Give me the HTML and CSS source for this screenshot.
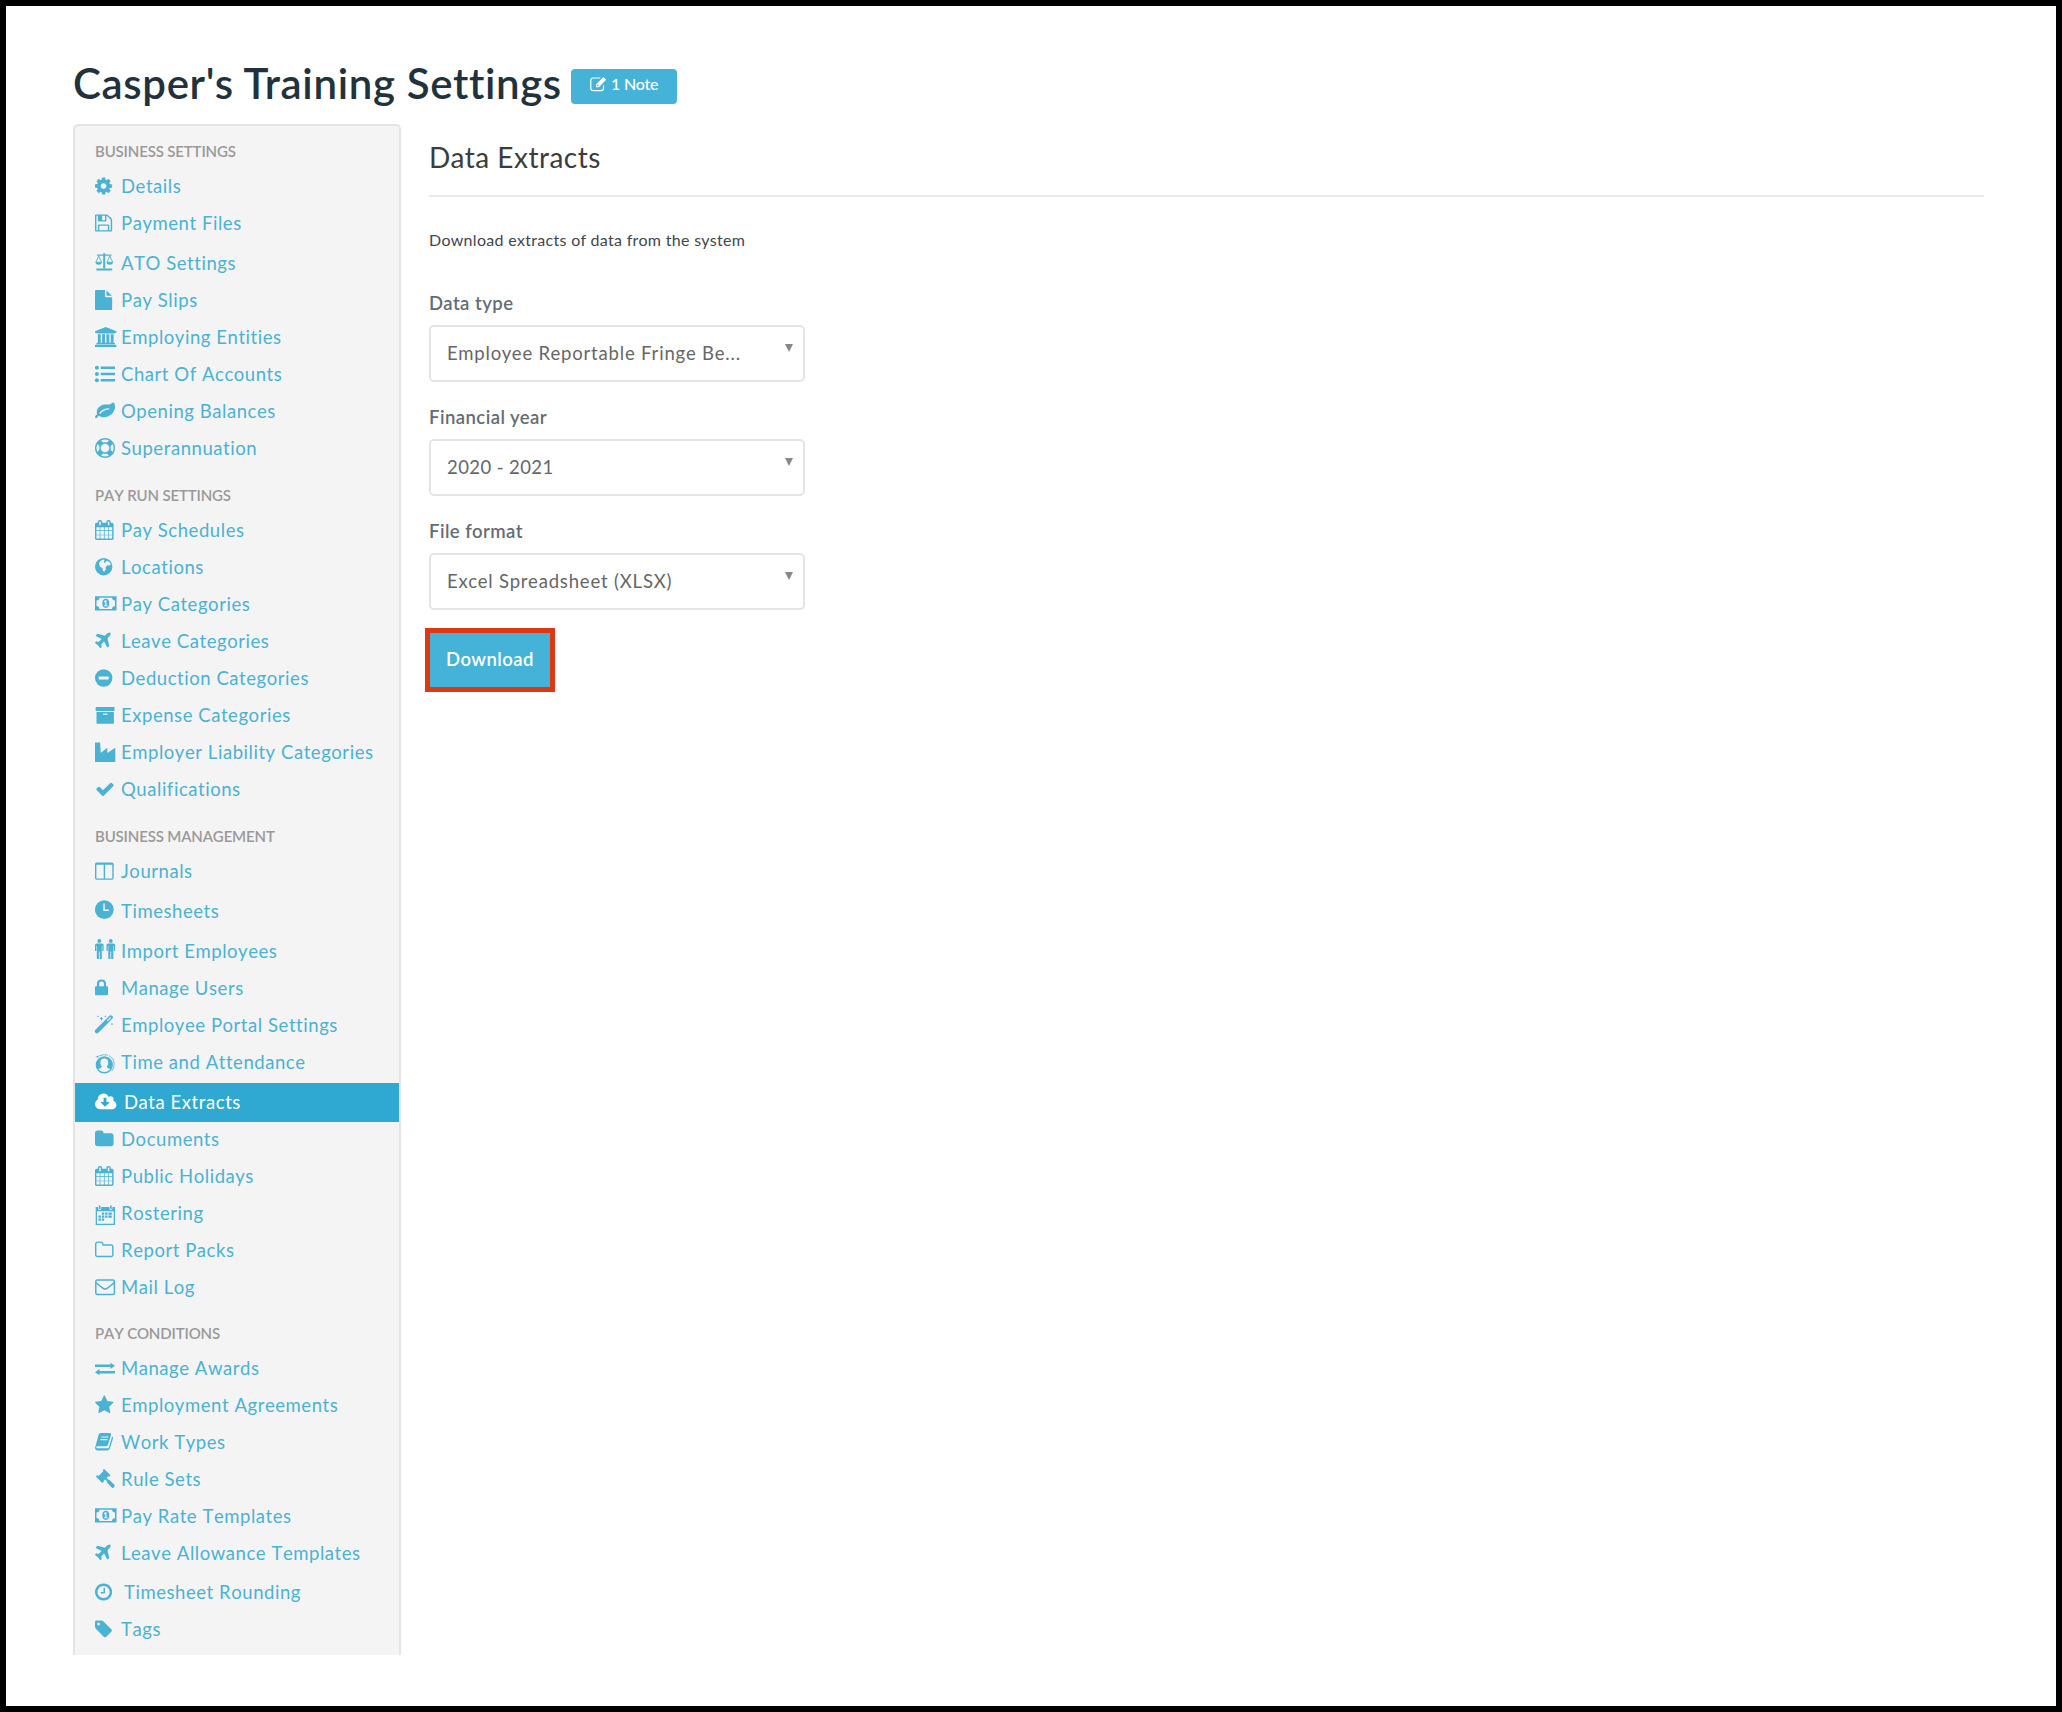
FILE: index.html
```
<!DOCTYPE html>
<html lang="en">
<head>
  <meta charset="UTF-8">
  <meta name="viewport" content="width=device-width, initial-scale=1.0">
  <title>Casper's Training Settings</title>
  <link rel="stylesheet" href="styles.css">
</head>
<body>
  <!-- icon sprite -->
  <svg class="sprite" width="0" height="0" aria-hidden="true">
    <symbol id="cog" viewBox="128 0 1536 1792" preserveAspectRatio="xMinYMid meet"><path d="M1152 896q0-106-75-181t-181-75-181 75-75 181 75 181 181 75 181-75 75-181zm512-109v222q0 12-8 23t-20 13l-185 28q-19 54-39 91 35 50 107 138 10 12 10 25t-9 23q-27 37-99 108t-94 71q-12 0-26-9l-138-108q-44 23-91 38-16 136-29 186-7 28-36 28h-222q-14 0-24.5-8.5t-11.5-21.5l-28-184q-49-16-90-37l-141 107q-10 9-25 9-14 0-25-11-126-114-165-168-7-10-7-23 0-12 8-23 15-21 51-66.5t54-70.5q-27-50-41-99l-183-27q-13-2-21-12.5t-8-23.5v-222q0-12 8-23t19-13l186-28q14-46 39-92-40-57-107-138-10-12-10-24 0-10 9-23 26-36 98.5-107.5t94.5-71.5q13 0 26 10l138 107q44-23 91-38 16-136 29-186 7-28 36-28h222q14 0 24.5 8.5t11.5 21.5l28 184q49 16 90 37l142-107q9-9 24-9 13 0 25 10 129 119 165 170 7 8 7 22 0 12-8 23-15 21-51 66.5t-54 70.5q26 50 41 98l183 28q13 2 21 12.5t8 23.5z"/></symbol>
    <symbol id="floppy" viewBox="128 0 1536 1792" preserveAspectRatio="xMinYMid meet"><path d="M512 1536h768v-384h-768v384zm896 0h128v-896q0-14-10-38.5t-20-34.5l-281-281q-10-10-34-20t-39-10v416q0 40-28 68t-68 28h-576q-40 0-68-28t-28-68v-416h-128v1280h128v-416q0-40 28-68t68-28h832q40 0 68 28t28 68v416zm-384-928v-320q0-13-9.5-22.5t-22.5-9.5h-192q-13 0-22.5 9.5t-9.5 22.5v320q0 13 9.5 22.5t22.5 9.5h192q13 0 22.5-9.5t9.5-22.5zm640 32v928q0 40-28 68t-68 28h-1344q-40 0-68-28t-28-68v-1344q0-40 28-68t68-28h928q40 0 88 20t76 48l280 280q28 28 48 76t20 88z"/></symbol>
    <symbol id="scales" viewBox="0 0 24 20"><path d="M8.200.2h2v1.300h6.300v1.200h-6.300v12.600h-2V2.700H1.900V1.500h6.300zM1.400 15.600h15.800v1.900H1.400z"/><path d="M3.700 3L.9 9.300h5.700zM14.800 3L12 9.300h5.700z" fill="none" stroke="currentColor" stroke-width=".9"/><path d="M.3 9.200h6.800q-.5 2.500-3.400 2.500T.3 9.200zM11.400 9.200h6.800q-.5 2.500-3.400 2.500t-3.400-2.500z"/></symbol>
    <symbol id="file" viewBox="128 0 1536 1792" preserveAspectRatio="xMinYMid meet"><path d="M1152 512v-472q22 14 36 28l408 408q14 14 28 36h-472zm-128 32q0 40 28 68t68 28h544v1056q0 40-28 68t-68 28h-1344q-40 0-68-28t-28-68v-1600q0-40 28-68t68-28h800v544z"/></symbol>
    <symbol id="bank" viewBox="0 0 1920 1792" preserveAspectRatio="xMinYMid meet"><path d="M960 0l960 384v128h-128q0 26-20.500 45t-48.500 19h-1526q-28 0-48.500-19t-20.500-45h-128v-128zm-704 640h256v768h128v-768h256v768h128v-768h256v768h128v-768h256v768h59q28 0 48.500 19t20.500 45v64h-1664v-64q0-26 20.500-45t48.500-19h59v-768zm1595 960q28 0 48.500 19t20.500 45v128h-1920v-128q0-26 20.500-45t48.500-19h1782z"/></symbol>
    <symbol id="list" viewBox="0 0 24 20"><circle cx="1.900" cy="3.700" r="2"/><circle cx="1.900" cy="10" r="2"/><circle cx="1.900" cy="16.300" r="2"/><path d="M5.700 2.500h14.300v2.500h-14.300zM5.700 8.800h14.300v2.500h-14.300zM5.700 15.100h14.300v2.500h-14.300z"/></symbol>
    <symbol id="leaf" viewBox="0 0 1792 1792" preserveAspectRatio="xMinYMid meet"><path d="M1280 704q0-26-19-45t-45-19q-172 0-318 49.500t-259.500 134-235.500 219.500q-19 21-19 45 0 26 19 45t45 19q24 0 45-19 27-24 74-71t67-66q137-124 268.500-176t313.500-52q26 0 45-19t19-45zm512-198q0 95-20 193-46 224-184.500 383t-357.500 268q-214 108-438 108-148 0-286-47-15-5-88-42t-96-37q-16 0-39.500 32t-45 70-52.500 70-60 32q-43 0-63.500-17.500t-45.500-59.500q-2-4-6-11t-5.500-10-3-9.500-1.500-13.500q0-35 31-73.500t68-65.500 68-56 31-48q0-4-14-38t-16-44q-9-51-9-104 0-115 43.500-220t119-184.500 170.500-139 204-95.500q55-18 145-25.500t179.500-9 178.500-6 163.500-24 113.500-56.500l29.500-29.500 29.500-28 27-20 36.500-16 43.500-4.500q39 0 70.500 46t47.500 112 24 124 8 96z"/></symbol>
    <symbol id="ring" viewBox="0 0 1792 1792" preserveAspectRatio="xMinYMid meet"><path d="M896 0q182 0 348 71t286 191 191 286 71 348-71 348-191 286-286 191-348 71-348-71-286-191-191-286-71-348 71-348 191-286 286-191 348-71zm0 128q-190 0-361 90l194 194q82-28 167-28t167 28l194-194q-171-90-361-90zm-678 1129l194-194q-28-82-28-167t28-167l-194-194q-90 171-90 361t90 361zm678 407q190 0 361-90l-194-194q-82 28-167 28t-167-28l-194 194q171 90 361 90zm0-384q159 0 271.500-112.500t112.500-271.500-112.500-271.500-271.500-112.500-271.500 112.500-112.500 271.500 112.500 271.500 271.500 112.500zm484-217l194 194q90-171 90-361t-90-361l-194 194q28 82 28 167t-28 167z"/></symbol>
    <symbol id="calendar" viewBox="64 0 1664 1792" preserveAspectRatio="xMinYMid meet"><path d="M192 1664h288v-288h-288v288zm352 0h320v-288h-320v288zm-352-352h288v-320h-288v320zm352 0h320v-320h-320v320zm-352-384h288v-288h-288v288zm736 736h320v-288h-320v288zm-384-736h320v-288h-320v288zm768 736h288v-288h-288v288zm-384-352h320v-320h-320v320zm-352-864v-288q0-13-9.500-22.500t-22.500-9.500h-64q-13 0-22.500 9.500t-9.500 22.500v288q0 13 9.500 22.500t22.500 9.500h64q13 0 22.500-9.500t9.500-22.500zm736 864h288v-320h-288v320zm-384-384h320v-288h-320v288zm384 0h288v-288h-288v288zm32-480v-288q0-13-9.500-22.500t-22.500-9.500h-64q-13 0-22.500 9.500t-9.500 22.500v288q0 13 9.500 22.500t22.500 9.500h64q13 0 22.500-9.500t9.500-22.500zm384-64v1280q0 52-38 90t-90 38h-1408q-52 0-90-38t-38-90v-1280q0-52 38-90t90-38h128v-96q0-66 47-113t113-47h64q66 0 113 47t47 113v96h384v-96q0-66 47-113t113-47h64q66 0 113 47t47 113v96h128q52 0 90 38t38 90z"/></symbol>
    <symbol id="globe" viewBox="0 0 24 20"><circle cx="8.700" cy="9.700" r="8.700"/><path class="cut" d="M5 4.200L8.200 2.400l1.400.7-1 1.900 1.300.9 1.900-2.200 2.800 1.400 1.300 2.500-1.500.9-2.200-.3-1.700 2.200.5 1.800-1.700 2.300-1.400-.4-.4-2.900-2.600-1.600-.9-2.900z"/></symbol>
    <symbol id="money" viewBox="0 0 24 20"><path fill-rule="evenodd" d="M0 2.200h21.500v14.200H0zM4.600 3.700Q4.300 6.300 1.500 6.600v5.400q2.800.3 3.100 2.900h12.300q.3-2.600 3.100-2.900V6.600q-2.800-.3-3.100-2.900z"/><ellipse cx="10.800" cy="9.300" rx="3.500" ry="4.600"/><path class="cut" d="M10.200 6.300h1.300v4.900h1v1.100H9.200v-1.100h1V8.100l-.9.500-.5-.9z"/></symbol>
    <symbol id="plane" viewBox="192 0 1408 1792" preserveAspectRatio="xMinYMid meet"><path d="M1568 160q44 52 12 148t-108 172l-161 161 160 696q5 19-12 33l-128 96q-7 6-19 6-4 0-7-1-15-3-21-16l-279-508-259 259 53 194q5 17-8 31l-96 96q-9 9-23 9h-2q-15-2-24-13l-189-252-252-189q-11-7-13-23-1-13 9-25l96-97q9-9 23-9 6 0 8 1l194 53 259-259-508-279q-14-8-17-24-2-16 9-27l128-128q14-13 30-8l665 159 160-160q76-76 172-108t148 12z"/></symbol>
    <symbol id="minus" viewBox="0 0 24 20"><circle cx="8.700" cy="10" r="8.700"/><rect class="cut" x="3.700" y="8.600" width="10" height="2.900" rx=".6"/></symbol>
    <symbol id="archive" viewBox="0 0 24 20"><path d="M.7 2.100h18.800v4H.7zM1.500 7.100h17.400v11.700H1.500z"/><rect class="cut" x="8" y="8.500" width="4.600" height="1.300" rx=".6"/></symbol>
    <symbol id="industry" viewBox="0 0 24 20"><path d="M0 .4h5.200l.5 10.600 6.600-5.300V11l8-5.300v14.400H0z"/></symbol>
    <symbol id="check" viewBox="0 0 1792 1792" preserveAspectRatio="xMinYMid meet"><path d="M1671 566q0 40-28 68l-724 724-136 136q-28 28-68 28t-68-28l-136-136-362-362q-28-28-28-68t28-68l136-136q28-28 68-28t68 28l294 295 656-657q28-28 68-28t68 28l136 136q28 28 28 68z"/></symbol>
    <symbol id="columns" viewBox="0 0 24 20"><path fill-rule="evenodd" d="M1.600 1.400h15.500q1.600 0 1.600 1.600v14q0 1.700-1.600 1.700H1.600Q0 18.700 0 17V3q0-1.600 1.600-1.600zM1.400 3.800v13.600h7.300V3.800zM10.100 3.800v13.600h7.200V3.800z"/></symbol>
    <symbol id="clock" viewBox="0 0 24 20"><circle cx="9.300" cy="8.700" r="9.400"/><path class="cut" d="M8.300 2.500h1.500v6h4v1.500H8.300z"/></symbol>
    <symbol id="men" viewBox="0 0 24 20"><g id="man"><circle cx="4.300" cy="0" r="1.900"/><path d="M1.500 2.400h5.600q1.500 0 1.500 1.500v6H7.300V5h-.5v13.100H4.700v-7.600h-.8v7.600H1.800V5h-.5v4.900H0v-6q0-1.500 1.500-1.500z"/></g><use href="#man" x="11.500"/></symbol>
    <symbol id="lock" viewBox="0 0 24 20"><rect y="8.300" width="13" height="9" rx="1"/><path d="M3 9V5.800q0-3.300 3.500-3.300T10 5.800V9" fill="none" stroke="currentColor" stroke-width="2.200"/></symbol>
    <symbol id="magic" viewBox="0 0 24 20"><path d="M1.900 16.200L15.800 2.300" fill="none" stroke="currentColor" stroke-width="4.100" stroke-linecap="round"/><path class="line" d="M12.300 5.900l3.400-3.400"/><path d="M6.400 1.600l.6 1.500 1.500.6-1.500.6-.6 1.500-.6-1.500-1.500-.6 1.500-.6zM3 .2l.3.900.9.300-.9.300-.3.900-.3-.9-.9-.3.900-.3zM10.300.2l.3.900.9.300-.9.300-.3.900-.3-.9-.9-.3.900-.3zM17 7.800l.4.900.9.400-.9.400-.4.900-.4-.9-.9-.4.900-.4z"/></symbol>
    <symbol id="userclock" viewBox="0 0 24 20"><circle cx="9.300" cy="12.900" r="8.600"/><path class="cut" d="M9.300 6.500q3.900 0 3.900 4.300 0 2.300-1.400 3.800 0 1.500 3.400 2.500-2 3-5.900 3t-5.900-3q3.400-1 3.400-2.500-1.400-1.500-1.400-3.800 0-4.300 3.900-4.300z"/><g fill="none" stroke="currentColor"><path d="M14 3.700q5.200 2.700 5.200 8.500 0 4-2.600 7" stroke-width=".8"/><path d="M3.500 4.200Q8 1.700 13 3.200" stroke-width=".8"/></g><path d="M.5 5.100l2.700-1.700.2 2.300z"/></symbol>
    <symbol id="cloud" viewBox="0 0 1920 1792" preserveAspectRatio="xMinYMid meet"><path d="M1280 928q0-14-9-23t-23-9h-224v-352q0-13-9.500-22.500t-22.500-9.500h-192q-13 0-22.500 9.500t-9.500 22.500v352h-224q-13 0-22.500 9.500t-9.500 22.500q0 14 9 23l352 352q9 9 23 9t23-9l351-351q10-12 10-24zm640 224q0 159-112.500 271.500t-271.500 112.500h-1088q-185 0-316.500-131.500t-131.500-316.500q0-130 70-240t188-165q-2-30-2-43 0-212 150-362t362-150q156 0 285.500 87t188.500 231q71-62 166-62 106 0 181 75t75 181q0 76-41 138 130 31 213.500 135.500t83.500 238.500z"/></symbol>
    <symbol id="folder" viewBox="64 0 1664 1792" preserveAspectRatio="xMinYMid meet"><path d="M1728 608v704q0 92-66 158t-158 66h-1216q-92 0-158-66t-66-158v-960q0-92 66-158t158-66h320q92 0 158 66t66 158v32h672q92 0 158 66t66 158z"/></symbol>
    <symbol id="roster" viewBox="0 0 24 20"><path fill-rule="evenodd" d="M.7 3.900h2.500v1.600q0 1.500 1.500 1.500t1.500-1.500V3.900h8.200v1.600q0 1.500 1.500 1.500t1.500-1.500V3.900H20v18.200H.7zM2 8.200v12.600h16.700V8.200z"/><path d="M3.900 2.400h1.600v3.500H3.900zM15.100 2.400h1.600v3.500h-1.600zM6.800 9.600h2.400v2.200H6.800zM10.100 9.600h2.400v2.200h-2.400zM13.400 9.600h3.400v2.200h-3.400zM3.500 12.600h2.400v2.200H3.500zM6.800 12.600h2.400v2.200H6.800zM10.100 12.600h2.400v2.200h-2.400zM13.400 12.600h3.400v2.200h-3.400zM3.500 15.600h2.400v2.200H3.500zM6.800 15.600h2.400v2.200H6.800z"/></symbol>
    <symbol id="folder-o" viewBox="64 0 1664 1792" preserveAspectRatio="xMinYMid meet"><path d="M1600 1312v-704q0-40-28-68t-68-28h-704q-40 0-68-28t-28-68v-64q0-40-28-68t-68-28h-320q-40 0-68 28t-28 68v960q0 40 28 68t68 28h1216q40 0 68-28t28-68zm128-704v704q0 92-66 158t-158 66h-1216q-92 0-158-66t-66-158v-960q0-92 66-158t158-66h320q92 0 158 66t66 158v32h672q92 0 158 66t66 158z"/></symbol>
    <symbol id="mail" viewBox="0 0 24 20"><g fill="none" stroke="currentColor" stroke-width="1.500"><rect x=".8" y="3.100" width="18.600" height="14.300" rx="1.500"/><path d="M1 5.600q1.500 1.700 6.700 5.600 2.400 1.900 4.800 0 5.200-3.900 6.700-5.600"/></g></symbol>
    <symbol id="exchange" viewBox="0 0 24 20"><path d="M0 6.600h15.500V4.700L20 7.800l-4.500 3.100V9H0zM20 13H4.500v-1.900L0 14.200l4.500 3.100v-1.900H20z"/></symbol>
    <symbol id="star" viewBox="64 0 1664 1792" preserveAspectRatio="xMinYMid meet"><path d="M1728 647q0 22-26 48l-363 354 86 500q1 7 1 20 0 21-10.500 35.500t-30.500 14.500q-19 0-40-12l-449-236-449 236q-22 12-40 12-21 0-31.500-14.500t-10.500-35.500q0-6 2-20l86-500-364-354q-25-27-25-48 0-37 56-46l502-73 225-455q19-41 49-41t49 41l225 455 502 73q56 9 56 46z"/></symbol>
    <symbol id="book" viewBox="0 0 24 20"><path d="M5.500 1.100h9.300q1.800 0 1.300 1.700l-3.100 9.900q-.5 1.600-2.100 1.600H2.300q-1.200 0-1 1.100.2.900 1.600.9h9.800q.9 0 1.200-.9L17.100 4.500q1.300.5.900 1.900l-3.100 10.200q-.6 1.800-2.400 1.800H3q-2.900 0-2.900-2.700L3.500 3Q4.100 1.100 5.500 1.100z"/><path class="line" d="M6.300 5h7M5.500 7.600h7"/></symbol>
    <symbol id="gavel" viewBox="0 0 24 20"><path d="M9.300 1.200l5 5-6.100 6.100-5-5z"/><path d="M9 1.300l5.200 5.200M2.200 7.400l5.400 5.200M10.600 9.300l7.300 7.700" fill="none" stroke="currentColor" stroke-width="2.200" stroke-linecap="round"/><path d="M14 13l3.800 3.900" fill="none" stroke="currentColor" stroke-width="3.800" stroke-linecap="round"/></symbol>
    <symbol id="clock-o" viewBox="128 0 1536 1792" preserveAspectRatio="xMinYMid meet"><path d="M1024 544v448q0 14-9 23t-23 9h-320q-14 0-23-9t-9-23v-64q0-14 9-23t23-9h224v-352q0-14 9-23t23-9h64q14 0 23 9t9 23zm416 352q0-148-73-273t-198-198-273-73-273 73-198 198-73 273 73 273 198 198 273 73 273-73 198-198 73-273zm224 0q0 209-103 385.500t-279.500 279.500-385.500 103-385.500-103-279.500-279.500-103-385.500 103-385.500 279.500-279.500 385.500-103 385.500 103 279.500 279.500 103 385.500z"/></symbol>
    <symbol id="tag" viewBox="128 0 1536 1792" preserveAspectRatio="xMinYMid meet"><path d="M576 448q0-53-37.500-90.500t-90.500-37.500-90.500 37.500-37.500 90.500 37.500 90.500 90.500 37.500 90.500-37.500 37.500-90.500zm1067 576q0 53-37 90l-491 492q-39 37-91 37-53 0-90-37l-715-716q-38-37-64.500-101t-26.500-117v-416q0-52 38-90t90-38h416q53 0 117 26.500t102 64.500l715 714q37 39 37 91z"/></symbol>
    <symbol id="edit" viewBox="0 0 18 16"><path d="M10.300 2H3.200Q.8 2 .8 4.400v7.800q0 2.400 2.400 2.400h7.900q2.400 0 2.400-2.400V9.600" fill="none" stroke="currentColor" stroke-width="1.200"/><path fill-rule="evenodd" d="M13.400.9l2.800 2.800-7.400 7.500H6V8.400zM7 8.900v1.200h1.300l.6-.6-1.300-1.300z"/></symbol>
  </svg>

  <div class="page">
    <header>
      <h1>Casper's Training Settings</h1>
      <a class="note-btn" href="#"><svg><use href="#edit"/></svg><span>1 Note</span></a>
    </header>
    <div class="columns">
      <nav class="sidebar">
        <h3>Business Settings</h3>
        <ul>
          <li><a href="#"><svg><use href="#cog"/></svg>Details</a></li>
          <li><a href="#"><svg><use href="#floppy"/></svg>Payment Files</a></li>
          <li><a class="taller" href="#"><svg><use href="#scales"/></svg>ATO Settings</a></li>
          <li><a href="#"><svg><use href="#file"/></svg>Pay Slips</a></li>
          <li><a href="#"><svg><use href="#bank"/></svg>Employing Entities</a></li>
          <li><a href="#"><svg><use href="#list"/></svg>Chart Of Accounts</a></li>
          <li><a href="#"><svg><use href="#leaf"/></svg>Opening Balances</a></li>
          <li><a href="#"><svg><use href="#ring"/></svg>Superannuation</a></li>
        </ul>
        <h3>Pay Run Settings</h3>
        <ul>
          <li><a href="#"><svg><use href="#calendar"/></svg>Pay Schedules</a></li>
          <li><a href="#"><svg><use href="#globe"/></svg>Locations</a></li>
          <li><a href="#"><svg><use href="#money"/></svg>Pay Categories</a></li>
          <li><a href="#"><svg><use href="#plane"/></svg>Leave Categories</a></li>
          <li><a href="#"><svg><use href="#minus"/></svg>Deduction Categories</a></li>
          <li><a href="#"><svg><use href="#archive"/></svg>Expense Categories</a></li>
          <li><a href="#"><svg><use href="#industry"/></svg>Employer Liability Categories</a></li>
          <li><a href="#"><svg><use href="#check"/></svg>Qualifications</a></li>
        </ul>
        <h3>Business Management</h3>
        <ul>
          <li><a href="#"><svg><use href="#columns"/></svg>Journals</a></li>
          <li><a class="taller" href="#"><svg><use href="#clock"/></svg>Timesheets</a></li>
          <li><a class="taller" href="#"><svg><use href="#men"/></svg>Import Employees</a></li>
          <li><a href="#"><svg><use href="#lock"/></svg>Manage Users</a></li>
          <li><a href="#"><svg><use href="#magic"/></svg>Employee Portal Settings</a></li>
          <li><a href="#"><svg><use href="#userclock"/></svg>Time and Attendance</a></li>
          <li><a class="active wide" href="#"><svg><use href="#cloud"/></svg>Data Extracts</a></li>
          <li><a href="#"><svg><use href="#folder"/></svg>Documents</a></li>
          <li><a href="#"><svg><use href="#calendar"/></svg>Public Holidays</a></li>
          <li><a href="#"><svg><use href="#roster"/></svg>Rostering</a></li>
          <li><a href="#"><svg><use href="#folder-o"/></svg>Report Packs</a></li>
          <li><a href="#"><svg><use href="#mail"/></svg>Mail Log</a></li>
        </ul>
        <h3 class="last">Pay Conditions</h3>
        <ul>
          <li><a href="#"><svg><use href="#exchange"/></svg>Manage Awards</a></li>
          <li><a href="#"><svg><use href="#star"/></svg>Employment Agreements</a></li>
          <li><a href="#"><svg><use href="#book"/></svg>Work Types</a></li>
          <li><a href="#"><svg><use href="#gavel"/></svg>Rule Sets</a></li>
          <li><a href="#"><svg><use href="#money"/></svg>Pay Rate Templates</a></li>
          <li><a href="#"><svg><use href="#plane"/></svg>Leave Allowance Templates</a></li>
          <li><a class="tall wide" href="#"><svg><use href="#clock-o"/></svg>Timesheet Rounding</a></li>
          <li><a href="#"><svg><use href="#tag"/></svg>Tags</a></li>
        </ul>
      </nav>
      <main>
        <h2>Data Extracts</h2>
        <p>Download extracts of data from the system</p>
        <div class="field">
          <label>Data type</label>
          <div class="select"><span>Employee Reportable Fringe Be...</span><i class="caret"></i></div>
        </div>
        <div class="field">
          <label>Financial year</label>
          <div class="select years"><span>2020 - 2021</span><i class="caret"></i></div>
        </div>
        <div class="field">
          <label>File format</label>
          <div class="select"><span>Excel Spreadsheet (XLSX)</span><i class="caret"></i></div>
        </div>
        <button class="download">Download</button>
      </main>
    </div>
  </div>
</body>
</html>
```
FILE: styles.css
```
* { box-sizing: border-box; }
body { margin: 0; font-family: Lato, "Open Sans", sans-serif; color: #444b52; background: #fff; }
h1, h2, h3, p, ul { margin: 0; padding: 0; font-weight: normal; }
svg { fill: currentColor; overflow: visible; }
symbol { overflow: visible; }
.sprite { display: block; height: 0; }
.cut { fill: #f4f4f4; }
.line { fill: none; stroke: #f4f4f4; stroke-width: 1.1; }

.page { height: 1712px; border: 6px solid #000; padding: 56px 72px 0 67px; overflow: hidden; }
header { display: flex; align-items: flex-start; height: 62px; }
h1 { margin-top: -1px; font-size: 42px; line-height: 44px; font-weight: 600; color: #22323d; letter-spacing: 0.65px; width: 498px; white-space: nowrap; }
.note-btn { display: flex; align-items: center; width: 106px; height: 35px; margin-top: 7px; padding: 0 0 6px 19px; background: #45b3d8; border-radius: 4px; color: #fff; font-size: 16px; font-weight: 500; letter-spacing: -0.2px; text-decoration: none; white-space: nowrap; }
.note-btn svg { width: 18px; height: 16px; margin-right: 3px; }

.columns { display: flex; align-items: flex-start; gap: 28px; }
.sidebar { width: 328px; height: 1531px; background: #f4f4f4; border: 2px solid #e3e4e4; border-bottom: 0; border-radius: 5px 5px 0 0; font-kerning: none; }
.sidebar h3 { display: flex; align-items: flex-end; height: 45px; padding: 0 0 8.5px 20px; font-size: 15px; line-height: 20px; font-weight: 600; text-transform: uppercase; color: #999; letter-spacing: -0.15px; }
.sidebar h3:first-child { height: 43px; }
.sidebar h3.last { height: 44px; }
ul { list-style: none; }
.sidebar a { display: flex; align-items: center; height: 37px; padding: 0 0 3px 20px; color: #4ab2d3; font-size: 18.5px; line-height: 22px; text-decoration: none; white-space: nowrap; letter-spacing: 0.55px; }
.sidebar a svg { width: 24px; height: 20px; margin-right: 2px; }
.sidebar a.wide svg { margin-right: 5px; }
.sidebar a.tall { height: 39px; padding-top: 2px; }
.sidebar a.taller { height: 40px; padding-top: 3px; }
.sidebar a.active { height: 39px; margin-top: 1px; padding-top: 2px; background: #2fa9d2; color: #fff; }

main { flex: 1; }
h2 { height: 73px; border-bottom: 2px solid #e8e9e9; padding-top: 16px; font-size: 28px; line-height: 34px; color: #3c3c3c; letter-spacing: 0.5px; }
p { padding: 33px 0 0; font-size: 16px; line-height: 20px; height: 91px; color: #3f464c; letter-spacing: 0.32px; }
.field { height: 114px; }
label { display: block; height: 37px; padding-top: 3px; font-size: 18.5px; line-height: 24px; font-weight: 600; color: #646c73; letter-spacing: 0.45px; }
.select { display: flex; justify-content: space-between; width: 376px; height: 57px; padding: 15px 10px 0 16px; border: 2px solid #e1e5e5; border-radius: 5px; font-size: 18.5px; line-height: 22px; color: #666; letter-spacing: 0.83px; white-space: nowrap; }
.select.years { letter-spacing: 0.4px; }
.caret { margin-top: 2px; width: 0; height: 0; border: 4.500px solid transparent; border-top: 8px solid #888; border-bottom: 0; }
.download { display: block; width: 130px; height: 64px; margin: -2px 0 0 -4px; padding: 0 0 2px; border: 5px solid #dc3912; background: #45b3d8; color: #fff; font: 600 18.5px Lato, sans-serif; letter-spacing: 0.45px; }
```
